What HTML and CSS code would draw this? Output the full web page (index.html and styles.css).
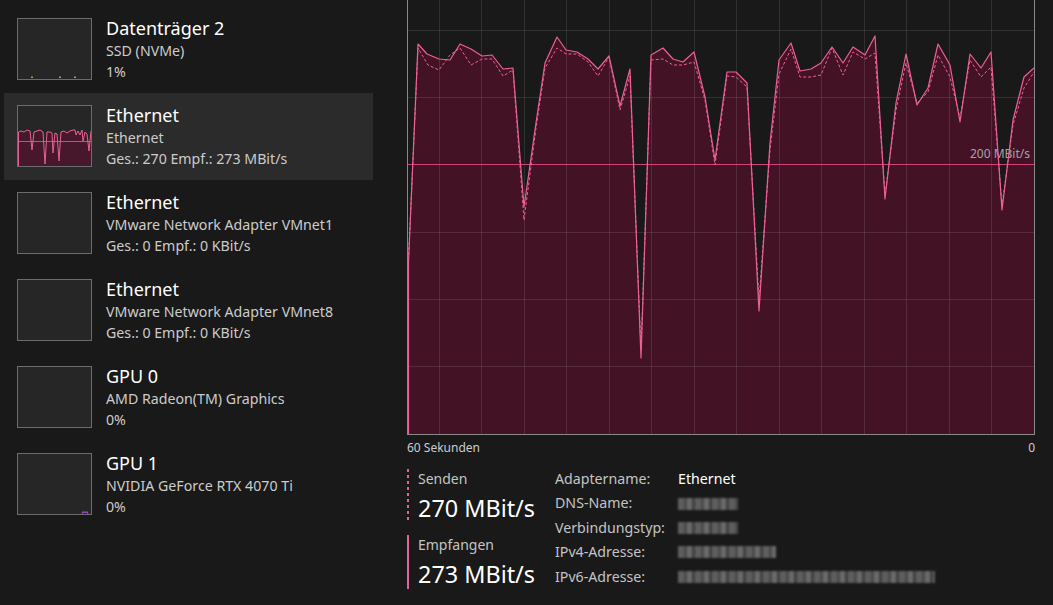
FILE: index.html
```html
<!DOCTYPE html>
<html lang="de">
<head>
<meta charset="utf-8">
<title>Task-Manager Leistung</title>
<link rel="stylesheet" href="styles.css">
</head>
<body>
<div class="app">
  <aside class="sidebar">
    <div class="item">
      <div class="thumb">
        <svg width="73" height="60" viewBox="0 0 73 60"><rect x="13" y="57.5" width="2" height="1.5" fill="#86b23c"/><rect x="41" y="57.5" width="2" height="1.5" fill="#86b23c"/><rect x="56" y="57.5" width="2" height="1.5" fill="#86b23c"/></svg>
      </div>
      <div class="info"><div class="title">Datenträger 2</div><div class="sub">SSD (NVMe)</div><div class="sub">1%</div></div>
    </div>
    <div class="item selected">
      <div class="thumb">
        <svg width="73" height="60" viewBox="0 0 73 60">
          <path class="mini-fill" d="M0,60 L0,26 L3,25 L6,26 L9,24 L12,25 L14,44 L16,26 L19,25 L22,24 L25,26 L27,58 L29,26 L32,26 L34,27 L35,47 L37,27 L39,28 L41,55 L43,26 L46,25 L49,27 L52,25 L55,24 L57,24 L58,29 L60,25 L62,29 L64,24 L65,35 L67,26 L69,28 L71,45 L73,25 L73,60 Z"/>
          <line x1="0" y1="35.5" x2="73" y2="35.5" class="mini-ref"/>
          <path class="mini-line" d="M0.5,60 L0.5,26 L3,25 L6,26 L9,24 L12,25 L14,44 L16,26 L19,25 L22,24 L25,26 L27,58 L29,26 L32,26 L34,27 L35,47 L37,27 L39,28 L41,55 L43,26 L46,25 L49,27 L52,25 L55,24 L57,24 L58,29 L60,25 L62,29 L64,24 L65,35 L67,26 L69,28 L71,45 L73,25"/>
        </svg>
      </div>
      <div class="info"><div class="title">Ethernet</div><div class="sub">Ethernet</div><div class="sub">Ges.: 270 Empf.: 273 MBit/s</div></div>
    </div>
    <div class="item">
      <div class="thumb"></div>
      <div class="info"><div class="title">Ethernet</div><div class="sub">VMware Network Adapter VMnet1</div><div class="sub">Ges.: 0 Empf.: 0 KBit/s</div></div>
    </div>
    <div class="item">
      <div class="thumb"></div>
      <div class="info"><div class="title">Ethernet</div><div class="sub">VMware Network Adapter VMnet8</div><div class="sub">Ges.: 0 Empf.: 0 KBit/s</div></div>
    </div>
    <div class="item">
      <div class="thumb"></div>
      <div class="info"><div class="title">GPU 0</div><div class="sub">AMD Radeon(TM) Graphics</div><div class="sub">0%</div></div>
    </div>
    <div class="item">
      <div class="thumb">
        <svg width="73" height="60" viewBox="0 0 73 60"><path d="M64,60 L65,57.5 L66,59 L67,57.5 L68,59 L69,57.5 L70,60" fill="none" stroke="#a94cd6" stroke-width="1"/></svg>
      </div>
      <div class="info"><div class="title">GPU 1</div><div class="sub">NVIDIA GeForce RTX 4070 Ti</div><div class="sub">0%</div></div>
    </div>
  </aside>

  <main class="main">
    <div class="graph">
      <svg width="626" height="434" viewBox="408 0 626 434">
        <path class="area" d="M408,434 L408,262 L418,44 L427,54 L439,59 L450,60 L460,44 L471,49 L482,56 L492,55 L503,69 L513,68 L524,207 L536,123 L545,63 L557,37 L566,50 L577,52 L588,59 L598,69 L609,56 L620,106 L630,69 L641,358 L651,55 L663,48 L673,59 L683,62 L694,52 L705,97 L715,160 L727,72 L736,72 L747,83 L759,311 L770,143 L779,60 L791,43 L800,71 L811,69 L821,63 L832,47 L843,63 L853,47 L865,55 L875,36 L885,199 L896,103 L906,54 L917,105 L928,88 L938,44 L950,65 L960,122 L970,54 L981,68 L991,52 L1002,210 L1013,120 L1024,77 L1034,68 L1034,434 Z"/>
        <g class="grid">
          <line x1="408" y1="30.5" x2="1034" y2="30.5"/>
          <line x1="408" y1="97.5" x2="1034" y2="97.5"/>
          <line x1="408" y1="232.5" x2="1034" y2="232.5"/>
          <line x1="408" y1="299.5" x2="1034" y2="299.5"/>
          <line x1="408" y1="366.5" x2="1034" y2="366.5"/>
          <line x1="439.5" y1="0" x2="439.5" y2="434"/>
          <line x1="481.5" y1="0" x2="481.5" y2="434"/>
          <line x1="524.5" y1="0" x2="524.5" y2="434"/>
          <line x1="566.5" y1="0" x2="566.5" y2="434"/>
          <line x1="609.5" y1="0" x2="609.5" y2="434"/>
          <line x1="651.5" y1="0" x2="651.5" y2="434"/>
          <line x1="694.5" y1="0" x2="694.5" y2="434"/>
          <line x1="736.5" y1="0" x2="736.5" y2="434"/>
          <line x1="779.5" y1="0" x2="779.5" y2="434"/>
          <line x1="821.5" y1="0" x2="821.5" y2="434"/>
          <line x1="864.5" y1="0" x2="864.5" y2="434"/>
          <line x1="906.5" y1="0" x2="906.5" y2="434"/>
          <line x1="949.5" y1="0" x2="949.5" y2="434"/>
          <line x1="991.5" y1="0" x2="991.5" y2="434"/>
        </g>
        <line class="ref" x1="408" y1="164.5" x2="1034" y2="164.5"/>
        <text class="ref-label" x="1030" y="158" text-anchor="end">200 MBit/s</text>
        <path class="send" d="M408,270 L418,48 L428,65 L439,70 L450,55 L460,48 L471,65 L482,59 L492,59 L503,76 L513,70 L524,220 L536,128 L545,68 L557,48 L566,54 L577,54 L588,62 L598,76 L609,57 L620,110 L630,76 L641,350 L651,60 L663,59 L673,65 L683,65 L694,62 L705,100 L715,165 L727,76 L736,77 L747,87 L759,300 L770,150 L779,74 L791,49 L800,77 L811,77 L821,75 L832,48 L843,75 L853,52 L865,59 L875,53 L885,195 L896,110 L906,63 L917,103 L928,92 L938,55 L950,77 L960,118 L970,60 L981,77 L991,67 L1002,205 L1013,125 L1024,88 L1034,72"/>
        <path class="recv" d="M408.5,434 L408.5,262 L418,44 L427,54 L439,59 L450,60 L460,44 L471,49 L482,56 L492,55 L503,69 L513,68 L524,207 L536,123 L545,63 L557,37 L566,50 L577,52 L588,59 L598,69 L609,56 L620,106 L630,69 L641,358 L651,55 L663,48 L673,59 L683,62 L694,52 L705,97 L715,160 L727,72 L736,72 L747,83 L759,311 L770,143 L779,60 L791,43 L800,71 L811,69 L821,63 L832,47 L843,63 L853,47 L865,55 L875,36 L885,199 L896,103 L906,54 L917,105 L928,88 L938,44 L950,65 L960,122 L970,54 L981,68 L991,52 L1002,210 L1013,120 L1024,77 L1034,68"/>
      </svg>
    </div>
    <div class="axis"><span>60 Sekunden</span><span>0</span></div>
    <div class="stats">
      <div class="rates">
        <div class="rate send-rate">
          <div class="rate-label">Senden</div>
          <div class="rate-value">270 MBit/s</div>
        </div>
        <div class="rate recv-rate">
          <div class="rate-label">Empfangen</div>
          <div class="rate-value">273 MBit/s</div>
        </div>
      </div>
      <dl class="props">
        <dt>Adaptername:</dt><dd class="plain">Ethernet</dd>
        <dt>DNS-Name:</dt><dd><span class="blur w-dns"></span></dd>
        <dt>Verbindungstyp:</dt><dd><span class="blur w-type"></span></dd>
        <dt>IPv4-Adresse:</dt><dd><span class="blur w-ip4"></span></dd>
        <dt>IPv6-Adresse:</dt><dd><span class="blur w-ip6"></span></dd>
      </dl>
    </div>
  </main>
</div>
</body>
</html>
```
FILE: styles.css
```css
html, body {
  margin: 0;
  background: #191919;
}
body {
  font-family: "Noto Sans", "Open Sans", sans-serif;
  color: #ffffff;
}
.app {
  display: flex;
  width: 1053px;
  height: 605px;
  overflow: hidden;
}
.sidebar {
  flex: none;
  width: 380px;
  box-sizing: border-box;
  padding: 6px 0 0 4px;
}
.item {
  display: flex;
  gap: 14px;
  width: 369px;
  height: 87px;
  box-sizing: border-box;
  padding: 12px 0 0 13px;
}
.item.selected {
  background: #2b2b2b;
}
.thumb {
  flex: none;
  width: 75px;
  height: 62px;
  box-sizing: border-box;
  border: 1px solid #6c6c6c;
  background: #262626;
}
.thumb svg {
  display: block;
}
.mini-fill {
  fill: #47182b;
}
.mini-ref {
  stroke: #d8467c;
  stroke-width: 1;
}
.mini-line {
  fill: none;
  stroke: #ea5f93;
  stroke-width: 1;
}
.info {
  margin-top: -2px;
  white-space: nowrap;
}
.title {
  font-size: 18px;
  line-height: 24px;
  color: #ffffff;
}
.sub {
  font-size: 14.2px;
  line-height: 21px;
  color: #cccccc;
}
.main {
  flex: none;
  padding-left: 27px;
}
.graph {
  width: 628px;
  height: 435px;
  box-sizing: border-box;
  border: 1px solid #8a8a8a;
  border-top: none;
}
.graph svg {
  display: block;
}
.area {
  fill: #431325;
}
.grid line {
  stroke: rgba(255, 255, 255, 0.1);
  stroke-width: 1;
}
.ref {
  stroke: #d3407a;
  stroke-width: 1;
}
.ref-label {
  font-family: "Noto Sans", "Open Sans", sans-serif;
  font-size: 12px;
  fill: #a8a0a6;
}
.recv {
  fill: none;
  stroke: #ec6096;
  stroke-width: 1.2;
  stroke-linejoin: round;
}
.send {
  fill: none;
  stroke: #ec6096;
  stroke-width: 1;
  stroke-dasharray: 3 2;
}
.axis {
  width: 628px;
  display: flex;
  justify-content: space-between;
  margin-top: 5px;
  font-size: 12px;
  line-height: 15px;
  color: #cccccc;
}
.stats {
  display: flex;
  margin-top: 12px;
}
.rates {
  flex: none;
  width: 148px;
  padding-top: 2px;
}
.rate {
  padding-left: 11px;
  background-repeat: no-repeat;
  background-size: 2px 100%;
  background-position: left top;
}
.send-rate {
  background-image: repeating-linear-gradient(to bottom, #e3629a 0 3px, transparent 3px 6px);
}
.recv-rate {
  margin-top: 12px;
  background-image: linear-gradient(#e3629a, #e3629a);
}
.rate-label {
  font-size: 14px;
  line-height: 20px;
  color: #c4c4c4;
}
.rate-value {
  font-size: 23.4px;
  line-height: 30px;
  margin-top: 4px;
  color: #ffffff;
}
.props {
  display: grid;
  grid-template-columns: 123px auto;
  margin: 0;
  font-size: 14.2px;
  line-height: 24px;
  color: #c4c4c4;
}
.props dt {
  margin: 0;
}
.props dd {
  margin: 0;
  display: flex;
  align-items: center;
}
.props dd.plain {
  color: #ffffff;
}
.blur {
  display: block;
  height: 12px;
  filter: blur(1.2px);
  background: repeating-linear-gradient(90deg, #5e5e5e 0 6px, #4a4a4a 6px 9px, #6a6a6a 9px 14px, #404040 14px 17px);
}
.w-dns { width: 60px; }
.w-type { width: 60px; }
.w-ip4 { width: 98px; }
.w-ip6 { width: 257px; }
```
